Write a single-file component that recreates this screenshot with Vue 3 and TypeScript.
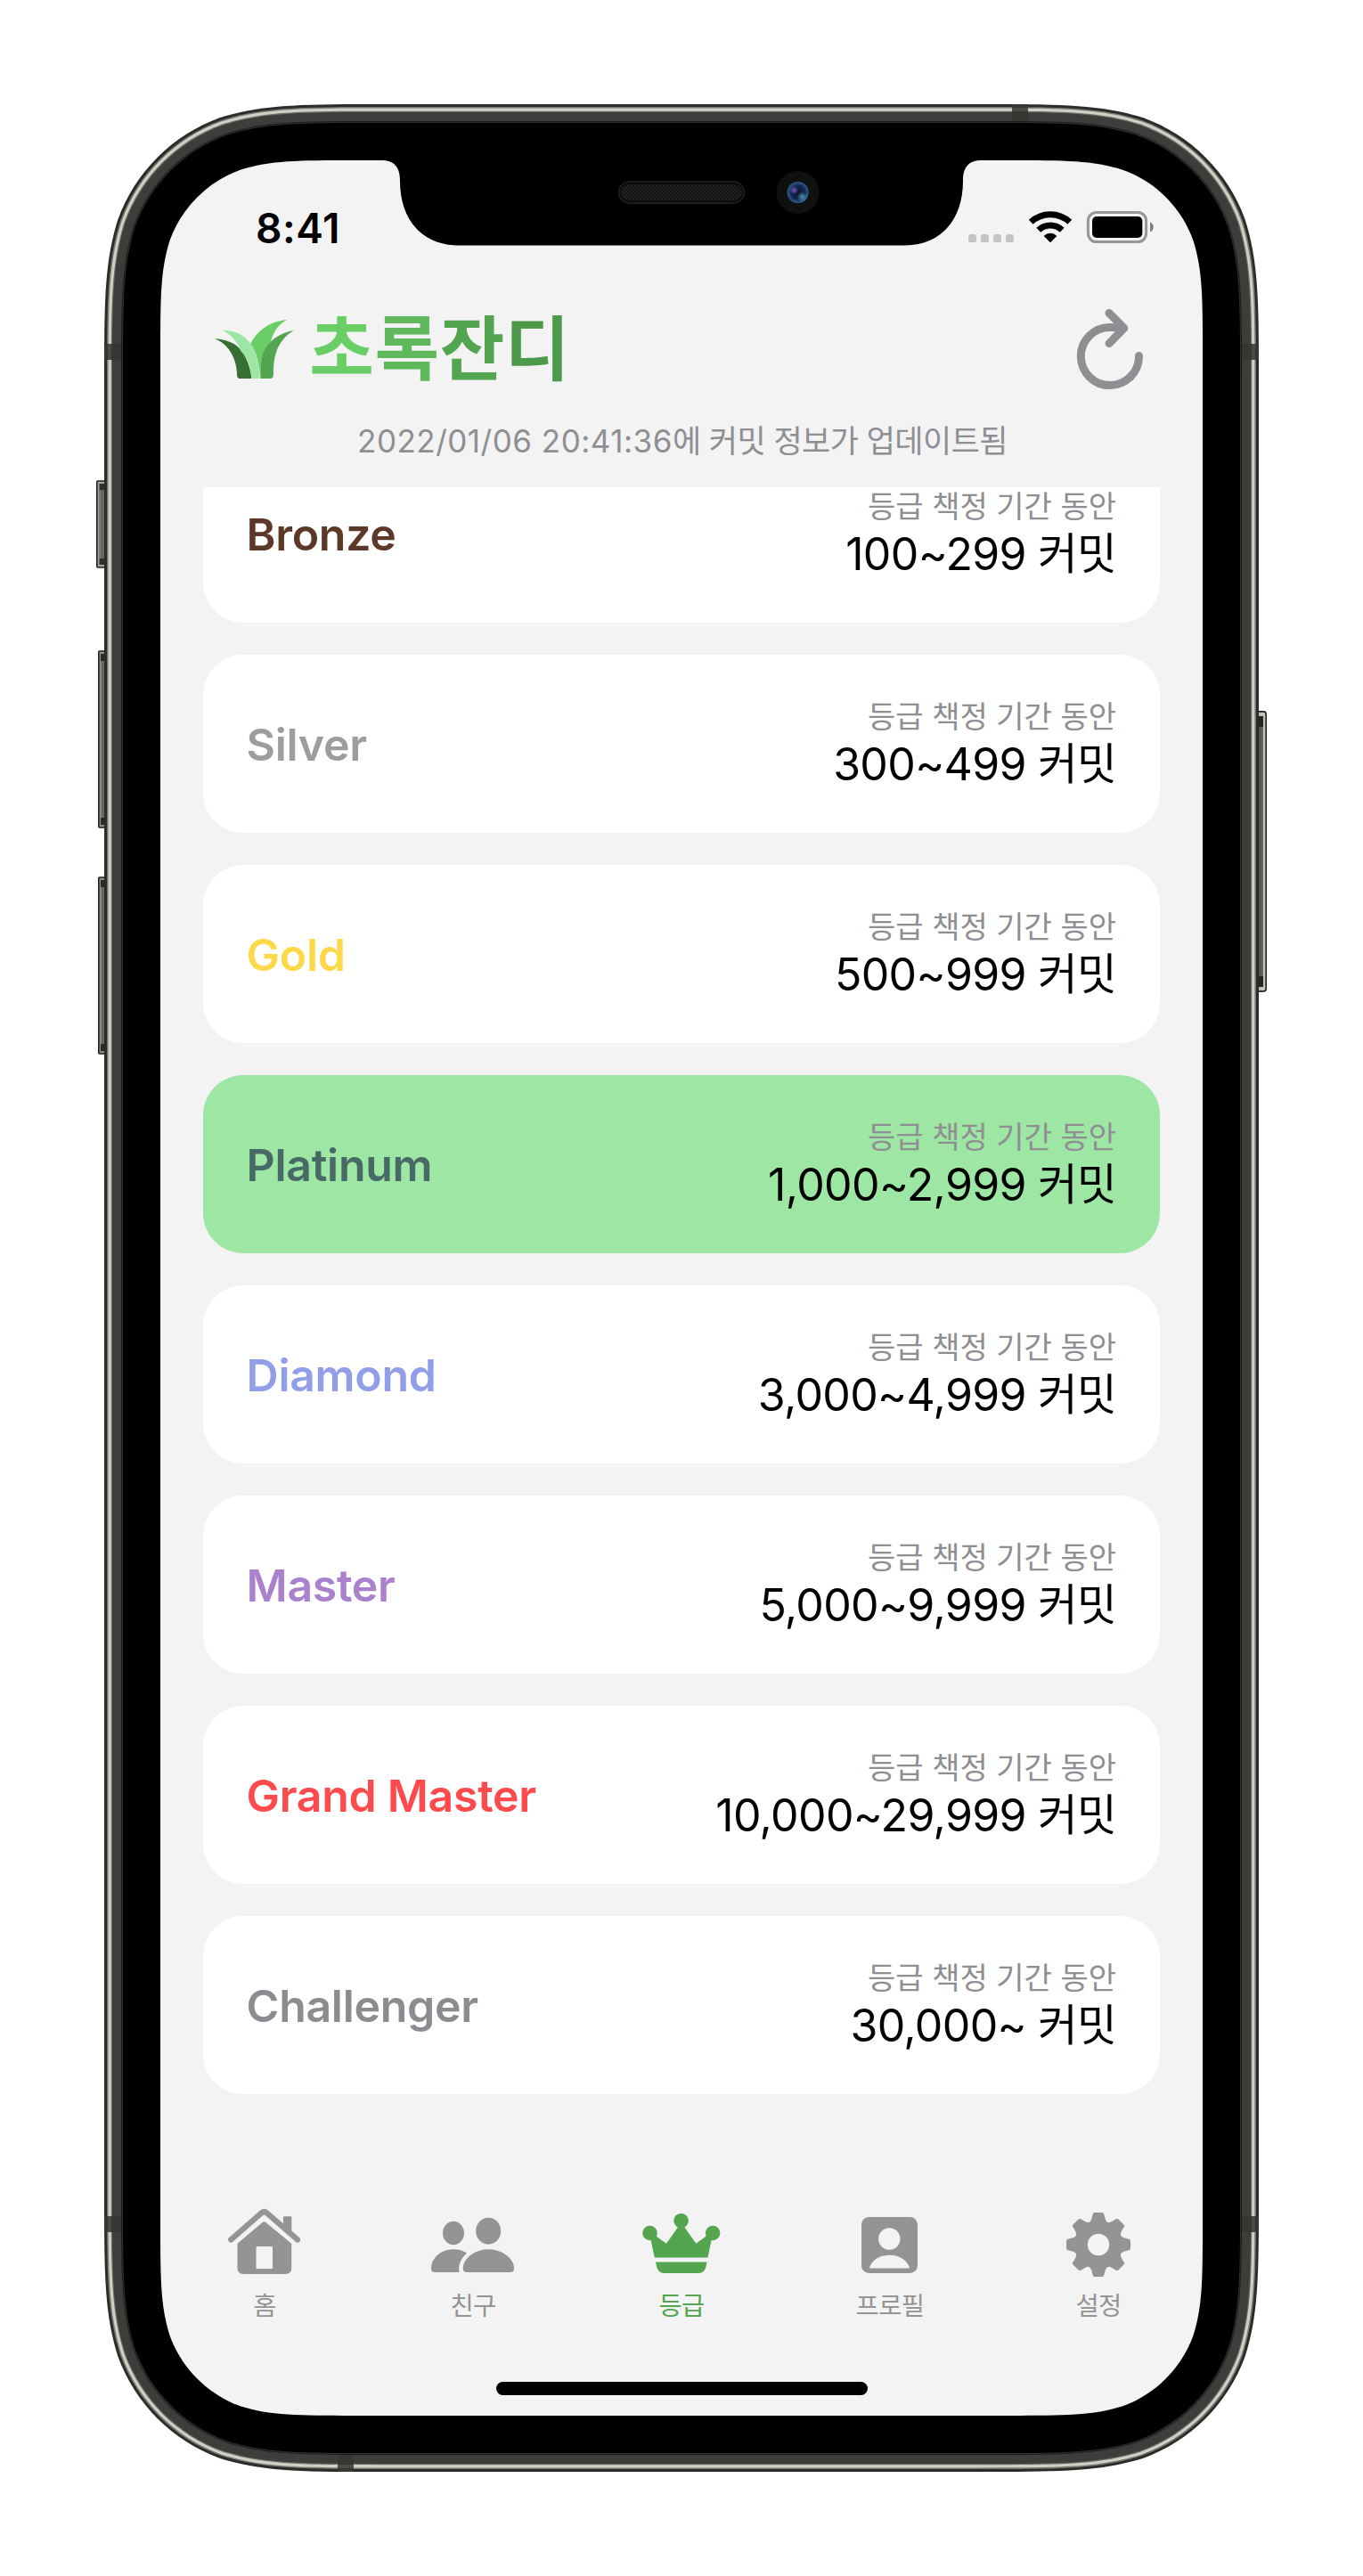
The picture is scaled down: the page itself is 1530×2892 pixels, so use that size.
<script setup lang="ts">
interface Tier {
  name: string
  range: string
  color: string
  current?: boolean
}

interface FrameLayer {
  inset: number
  fill: string
}

const tiers: Tier[] = [
  { name: 'Bronze', range: '100~299', color: '#5c3829' },
  { name: 'Silver', range: '300~499', color: '#9d9d9f' },
  { name: 'Gold', range: '500~999', color: '#fdd949' },
  { name: 'Platinum', range: '1,000~2,999', color: '#476a66', current: true },
  { name: 'Diamond', range: '3,000~4,999', color: '#929ee8' },
  { name: 'Master', range: '5,000~9,999', color: '#a981cd' },
  { name: 'Grand Master', range: '10,000~29,999', color: '#fc4a4d' },
  { name: 'Challenger', range: '30,000~', color: '#8b8b90' },
]

const layers: FrameLayer[] = [
  { inset: 0, fill: '#2b2c29' },
  { inset: 3, fill: '#75766f' },
  { inset: 4.6, fill: '#cfcfc5' },
  { inset: 7.8, fill: '#6c6c66' },
  { inset: 9, fill: '#3d3d3b' },
  { inset: 19, fill: '#1c1c1b' },
  { inset: 20, fill: '#30302f' },
  { inset: 21, fill: '#000' },
]

/* Rounded rectangle with continuous-curvature corners. */
function squircle(x: number, y: number, w: number, h: number, r: number): string {
  const a = 1.528665 * r
  const b = 1.08849296 * r
  const c = 0.86840694 * r
  const d = 0.63149379 * r
  const e = 0.07491139 * r
  const f = 0.37282383 * r
  const g = 0.16905956 * r
  const R = x + w
  const B = y + h
  return [
    `M${x + a} ${y}H${R - a}`,
    `C${R - b} ${y} ${R - c} ${y} ${R - d} ${y + e}`,
    `C${R - f} ${y + g} ${R - g} ${y + f} ${R - e} ${y + d}`,
    `C${R} ${y + c} ${R} ${y + b} ${R} ${y + a}V${B - a}`,
    `C${R} ${B - b} ${R} ${B - c} ${R - e} ${B - d}`,
    `C${R - g} ${B - f} ${R - f} ${B - g} ${R - d} ${B - e}`,
    `C${R - c} ${B} ${R - b} ${B} ${R - a} ${B}H${x + a}`,
    `C${x + b} ${B} ${x + c} ${B} ${x + d} ${B - e}`,
    `C${x + f} ${B - g} ${x + g} ${B - f} ${x + e} ${B - d}`,
    `C${x} ${B - c} ${x} ${B - b} ${x} ${B - a}V${y + a}`,
    `C${x} ${y + b} ${x} ${y + c} ${x + e} ${y + d}`,
    `C${x + g} ${y + f} ${x + f} ${y + g} ${x + d} ${y + e}`,
    `C${x + c} ${y} ${x + b} ${y} ${x + a} ${y}Z`,
  ].join('')
}

const frame = layers.map((l) => ({
  fill: l.fill,
  d: squircle(117 + l.inset, 117 + l.inset, 1296 - 2 * l.inset, 2658 - 2 * l.inset, 205 - l.inset),
}))
const screenPath = squircle(180, 180, 1170, 2532, 142)

const teeth = Array.from({ length: 8 }, (_, i) => i * 45)
</script>

<template>
  <main class="stage">
    <svg class="device" viewBox="0 0 1530 2892" width="1530" height="2892">
      <defs>
        <linearGradient id="key" x1="0" x2="1" y1="0" y2="0">
          <stop offset="0" stop-color="#8a8b84" />
          <stop offset="0.35" stop-color="#5d5e5a" />
          <stop offset="1" stop-color="#7c7e77" />
        </linearGradient>
        <linearGradient id="power" x1="0" x2="1" y1="0" y2="0">
          <stop offset="0" stop-color="#3a3b39" />
          <stop offset="1" stop-color="#6a6b67" />
        </linearGradient>
        <radialGradient id="lens">
          <stop offset="0" stop-color="#0c1230" />
          <stop offset="0.6" stop-color="#10224a" />
          <stop offset="1" stop-color="#2f5f8f" />
        </radialGradient>
        <radialGradient id="violet">
          <stop offset="0" stop-color="#7a55b8" />
          <stop offset="1" stop-color="#7a55b8" stop-opacity="0" />
        </radialGradient>
        <radialGradient id="cyan">
          <stop offset="0" stop-color="#4a93ad" />
          <stop offset="1" stop-color="#4a93ad" stop-opacity="0" />
        </radialGradient>
        <pattern id="mesh" width="4" height="4" patternUnits="userSpaceOnUse">
          <rect width="4" height="4" fill="#121212" />
          <rect width="2" height="2" fill="#222" />
          <rect x="2" y="2" width="2" height="2" fill="#222" />
        </pattern>
      </defs>

      <g stroke="#1f201e" stroke-width="1.6">
        <rect x="108.8" y="540" width="14" height="97" rx="1" fill="#a3a49c" />
        <rect x="110.8" y="731" width="12" height="198" rx="1" fill="#8d8f88" />
        <rect x="110.8" y="985" width="12" height="198" rx="1" fill="#8d8f88" />
        <rect x="1406" y="798.9" width="15.2" height="314" rx="3" fill="#c3c3b9" />
      </g>
      <rect x="111.5" y="543" width="8" height="91" fill="#2f302d" />
      <rect x="111.5" y="550" width="8" height="77" fill="url(#key)" />
      <rect x="113" y="734" width="6" height="192" fill="#2a2b29" />
      <rect x="113" y="742" width="6" height="176" fill="url(#key)" />
      <rect x="113" y="988" width="6" height="192" fill="#2a2b29" />
      <rect x="113" y="996" width="6" height="176" fill="url(#key)" />
      <rect x="1410" y="804" width="8" height="304" fill="#262725" />
      <rect x="1410" y="816" width="8" height="280" fill="url(#power)" />

      <path v-for="(l, i) in frame" :key="i" :d="l.d" :fill="l.fill" />

      <g fill="#363733">
        <rect x="1136" y="117" width="18" height="19" />
        <rect x="379" y="2756" width="18" height="19" />
        <rect x="117" y="386" width="19" height="18" />
        <rect x="1394" y="386" width="19" height="18" />
        <rect x="117" y="2488" width="19" height="18" />
        <rect x="1394" y="2488" width="19" height="18" />
      </g>
      <g fill="#4a4b47">
        <rect x="1136" y="121" width="18" height="4" />
        <rect x="379" y="2767" width="18" height="4" />
        <rect x="121" y="386" width="4" height="18" />
        <rect x="1405" y="386" width="4" height="18" />
        <rect x="121" y="2488" width="4" height="18" />
        <rect x="1405" y="2488" width="4" height="18" />
      </g>

      <path :d="screenPath" fill="#f3f3f3" />
      <path
        d="M428 178V180C443 180 449 188 449 203C449 247 474 275.5 515 275.5H1015C1056 275.5 1081 247 1081 203C1081 188 1087 180 1102 180V178Z"
        fill="#000"
      />
      <rect x="694.6" y="203.6" width="140.8" height="24.6" rx="12.3" fill="#0c0c0c" stroke="#232323" stroke-width="1.4" />
      <rect x="697" y="207" width="136" height="18" rx="9" fill="url(#mesh)" />
      <circle cx="895.7" cy="216" r="24" fill="#101010" />
      <circle cx="895.7" cy="216" r="12" fill="url(#lens)" />
      <circle cx="891.5" cy="213.5" r="5" fill="url(#violet)" />
      <circle cx="900.5" cy="221" r="6" fill="url(#cyan)" />
    </svg>

    <section class="screen">
      <div class="status">
        <span class="clock">8:41</span>
        <svg viewBox="1080 230 220 50" width="220" height="50">
          <g fill="#c4c4c4">
            <rect v-for="n in 4" :key="n" :x="1073 + n * 14" y="263" width="9" height="9" rx="2.6" />
          </g>
          <g fill="none" stroke="#000" stroke-width="7">
            <path d="M1157.2 249.3A32 32 0 0 1 1200.8 249.3" />
            <path d="M1165.8 258.2A19.4 19.4 0 0 1 1192.2 258.2" />
          </g>
          <path d="M1179 272L1172 265A9.9 9.9 0 0 1 1186 265Z" stroke="#000" stroke-width="0.6" />
          <rect x="1221.4" y="238.4" width="65.2" height="33.2" rx="9.5" fill="#f3f3f3" stroke="#969696" stroke-width="3" />
          <rect x="1226" y="243" width="56.3" height="24" rx="5" />
          <path d="M1291 249.5C1296 251.5 1296 258.5 1291 260.5Z" fill="#7d7d7d" />
        </svg>
      </div>

      <header class="header">
        <svg class="leaf" viewBox="420 770 280 210" width="93.3" height="70">
          <path d="M544 858C556 828 598 780 667 776C640 790 620 815 612 850L592 974H576C575 930 562 880 544 858Z" fill="#6ace66" />
          <path d="M690 811C640 820 602 850 588 885C578 908 579 940 579 974H611C617 974 621 968 621 958C621 905 628 850 690 811Z" fill="#54a550" />
          <path d="M423 840C468 843 500 856 520 890C535 915 545 945 547 974H508C502 974 498 970 498 958C497 915 476 860 423 840Z" fill="#386e33" />
          <path d="M450 811C500 812 530 832 547 862C566 895 573 935 574 974H547C545 930 535 905 510 880C503 856 484 830 450 811Z" fill="#9de6a3" />
        </svg>
        <h1 class="brand"><span>초</span><span>록</span><span>잔</span><span>디</span></h1>
        <svg class="refresh" viewBox="1200 340 90 104" width="90" height="104" fill="none" stroke="#8e8e93" stroke-width="9" stroke-linecap="round" stroke-linejoin="round">
          <path d="M1278.5 399.5A32.6 32.6 0 1 1 1246 367.4Q1254 367.4 1259 368.4" />
          <path d="M1245 351.5L1261.8 368.4L1245 385.6" />
        </svg>
      </header>

      <p class="updated"><span class="stamp">2022/01/06 20:41:36</span><span class="ko">에 커밋 정보가 업데이트됨</span></p>

      <div class="viewport">
        <article v-for="t in tiers" :key="t.name" class="card" :class="{ current: t.current }">
          <h2 class="tier" :style="{ color: t.color }">{{ t.name }}</h2>
          <div class="rule">
            <span class="caption">등급 책정 기간 동안</span>
            <span class="commits"><span class="num">{{ t.range }}</span><span class="unit">커밋</span></span>
          </div>
        </article>
      </div>

      <nav class="tabs">
        <a class="tab">
          <svg viewBox="249 2474 96 84" width="96" height="84" fill="#949494">
            <path d="M318.5 2488.3H326Q327.3 2488.3 327.3 2489.6V2508L318 2500V2489.6Q318 2488.3 319.5 2488.3Z" />
            <path d="M259.3 2514.4L293.8 2484.2Q296.5 2482 299.2 2484.2L333.9 2514.4" fill="none" stroke="#949494" stroke-width="6.4" stroke-linecap="round" />
            <path fill-rule="evenodd" d="M295 2494.8Q296.5 2493.6 298 2494.8L327.2 2518.8V2546.5Q327.2 2553 320.7 2553H273Q266.5 2553 266.5 2546.5V2518.8ZM289 2522Q287.5 2522 287.5 2523.5V2547H306V2523.5Q306 2522 304.5 2522Z" />
          </svg>
          <span>홈</span>
        </a>
        <a class="tab">
          <svg viewBox="483 2474 96 84" width="96" height="84" fill="#949494">
            <ellipse cx="509" cy="2507" rx="12" ry="13.2" />
            <ellipse cx="548.2" cy="2504.7" rx="14" ry="15" />
            <path d="M509 2525.2C515 2525.2 520 2526.5 524 2529.6C517 2536 514 2543 515.6 2551H488.5Q484 2551 484 2546.5C484 2535 495 2525.2 509 2525.2Z" />
            <path d="M548.3 2525.2C565 2525.2 577 2536.5 577 2546.5Q577 2551 572.5 2551H524.2Q519.7 2551 519.7 2546.5C519.7 2536.5 531.5 2525.2 548.3 2525.2Z" />
          </svg>
          <span>친구</span>
        </a>
        <a class="tab active">
          <svg viewBox="717 2474 96 84" width="96" height="84" fill="#54a550">
            <circle cx="764.6" cy="2493.2" r="8.3" />
            <circle cx="729.5" cy="2507" r="8.3" />
            <circle cx="800.1" cy="2507" r="8.3" />
            <path d="M762 2499H767.4L781.4 2518.8L793.6 2509.8L799.2 2512.5L794.5 2534.4H734.8L730 2512.5L735.4 2509.8L748 2518.8Z" />
            <path d="M736 2539.6H793.6L792.4 2545Q790.6 2552 784.4 2552H745.2Q739 2552 737.2 2545Z" />
          </svg>
          <span>등급</span>
        </a>
        <a class="tab">
          <svg viewBox="951 2474 96 84" width="96" height="84" fill="#949494">
            <rect x="967" y="2489" width="63" height="63" rx="8.5" />
            <circle cx="998.3" cy="2513.5" r="12.2" fill="#f3f3f3" />
            <path d="M976 2546.5C978 2538 987 2531.8 998.4 2531.8S1019 2538 1021 2546.5Z" fill="#f3f3f3" />
          </svg>
          <span>프로필</span>
        </a>
        <a class="tab">
          <svg viewBox="-48 -46 96 84" width="96" height="84" fill="#949494">
            <circle r="19.5" fill="none" stroke="#949494" stroke-width="14.6" />
            <path
              v-for="a in teeth"
              :key="a"
              d="M-11.5 -24Q-8.5 -26 -7.6 -29L-6.3 -34.3Q-5.8 -36 -4 -36H4Q5.8 -36 6.3 -34.3L7.6 -29Q8.5 -26 11.5 -24L6 -18H-6Z"
              :transform="`rotate(${a})`"
            />
          </svg>
          <span>설정</span>
        </a>
      </nav>
      <div class="home-indicator"></div>
    </section>
  </main>
</template>

<style>
body {
  margin: 0;
  background: #fff;
}
</style>

<style scoped>
.stage {
  display: grid;
  width: 1530px;
  height: 2892px;
  overflow: hidden;
  background: #fff;
  font-family: Inter, 'Noto Sans CJK KR', sans-serif;
}

.device,
.screen {
  grid-area: 1 / 1;
}

.device {
  display: block;
}

.screen {
  display: flex;
  flex-direction: column;
  box-sizing: border-box;
  width: 1170px;
  height: 2532px;
  margin: 180px;
}

.status {
  display: flex;
  justify-content: space-between;
  align-items: flex-start;
  box-sizing: border-box;
  flex: none;
  height: 150px;
  padding: 50px 50px 0 107px;
}

.clock {
  font-size: 46px;
  font-weight: 600;
  letter-spacing: 0.6px;
  line-height: 52px;
}

.header {
  display: flex;
  align-items: flex-start;
  box-sizing: border-box;
  flex: none;
  height: 130px;
  padding: 0 60px;
}

.leaf {
  margin-top: 26.5px;
}

.brand {
  margin: 0 auto 0 14px;
  font-size: 79px;
  font-weight: 700;
  letter-spacing: 0.5px;
  line-height: 124px;
}

.brand span:nth-child(1) {
  color: #6ace66;
}

.brand span:nth-child(2) {
  color: #5fb95c;
}

.brand span:nth-child(3) {
  color: #54a550;
}

.brand span:nth-child(4) {
  color: #4f994b;
}

.refresh {
  margin-top: 10px;
}

.updated {
  flex: none;
  height: 87px;
  margin: 0;
  padding-left: 2px;
  color: #8e8e93;
  font-size: 35px;
  line-height: 70px;
  text-align: center;
  white-space: pre;
}

.stamp {
  letter-spacing: 0.5px;
}

.ko {
  letter-spacing: -0.55px;
}

.viewport {
  display: flex;
  flex-direction: column;
  justify-content: flex-end;
  gap: 36px;
  box-sizing: border-box;
  flex: none;
  height: 1804px;
  padding: 0 48px;
  overflow: hidden;
}

.card {
  display: flex;
  justify-content: space-between;
  align-items: center;
  box-sizing: border-box;
  flex: none;
  height: 200px;
  padding: 0 49px 0 48.6px;
  border-radius: 45px;
  background: #fff;
}

.card.current {
  background: #9de6a3;
}

.tier {
  margin: 0;
  font-size: 50px;
  font-weight: 600;
  letter-spacing: -0.3px;
  line-height: 60px;
  padding-top: 2px;
}

.rule {
  display: flex;
  flex-direction: column;
  align-items: flex-end;
}

.caption {
  color: #8e8e93;
  font-size: 34px;
  line-height: 46px;
}

.commits {
  display: flex;
  gap: 13px;
  font-size: 50px;
  line-height: 60px;
}

.num {
  letter-spacing: -0.65px;
}

.unit {
  font-size: 48.5px;
  letter-spacing: -0.6px;
}

.tabs {
  display: flex;
  flex: none;
  margin-top: 123px;
}

.tab {
  display: flex;
  flex: 1;
  flex-direction: column;
  align-items: center;
  color: #949494;
  font-size: 28.5px;
  letter-spacing: -0.6px;
  line-height: 40px;
}

.tab svg {
  display: block;
  margin-bottom: 11px;
}

.tab.active {
  color: #54a550;
}

.home-indicator {
  width: 417px;
  height: 15px;
  margin: auto auto 23px;
  border-radius: 7.5px;
  background: #000;
}
</style>
